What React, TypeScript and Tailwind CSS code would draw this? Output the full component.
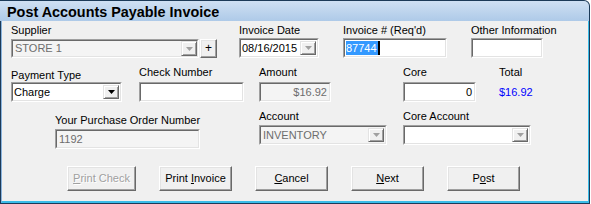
import React from "react";

const font = { fontFamily: '"Liberation Sans", Arial, sans-serif' };

function Arrow({ color = "#000" }: { color?: string }) {
  return (
    <svg width="7" height="4" viewBox="0 0 7 4">
      <path d="M0 0 H7 L3.5 4 Z" fill={color} />
    </svg>
  );
}

function ArrowBtn({ disabled }: { disabled?: boolean }) {
  return (
    <div className="w-[16px] h-full flex items-center justify-center bg-[#f0f0f0] border border-t-[#e3e3e3] border-l-[#e3e3e3] border-b-[#696969] border-r-[#696969] shadow-[inset_1px_1px_0_#ffffff,inset_-1px_-1px_0_#a0a0a0]">
      <Arrow color={disabled ? "#a0a0a0" : "#000"} />
    </div>
  );
}

function Sunken({
  w,
  h,
  bg = "bg-white",
  children,
}: {
  w: string;
  h: string;
  bg?: string;
  children?: React.ReactNode;
}) {
  return (
    <div className={`${w} ${h} flex border border-t-[#a0a0a0] border-l-[#a0a0a0] border-b-white border-r-white`}>
      <div className={`flex-1 flex items-stretch min-w-0 border border-t-[#696969] border-l-[#696969] border-b-[#e3e3e3] border-r-[#e3e3e3] ${bg}`}>
        {children}
      </div>
    </div>
  );
}

function Label({ children, cls = "" }: { children: React.ReactNode; cls?: string }) {
  return <div className={`h-[13px] leading-[13px] text-[11px] text-black whitespace-nowrap ${cls}`}>{children}</div>;
}

function Btn({
  w,
  h = "h-[25px]",
  children,
  disabled,
}: {
  w: string;
  h?: string;
  children: React.ReactNode;
  disabled?: boolean;
}) {
  return (
    <div
      className={`${w} ${h} flex items-center justify-center bg-[#f0f0f0] border border-t-white border-l-white border-b-[#696969] border-r-[#696969] shadow-[inset_-1px_-1px_0_#a0a0a0,inset_1px_1px_0_#e3e3e3] text-[11px] ${
        disabled ? "text-[#a0a0a0] [text-shadow:1px_1px_0_#ffffff]" : "text-black"
      }`}
    >
      {children}
    </div>
  );
}

export default function App() {
  return (
    <div className="w-[591px] h-[204px] bg-white" style={font}>
      <div className="w-[590px] h-[204px] flex flex-col bg-[#1c3a58] rounded-tr-[6px] overflow-hidden">
        {/* title bar */}
        <div className="h-[20px] shrink-0 mr-[1px] mt-[1px] rounded-tr-[5px] bg-gradient-to-b from-[#cfe0f3] to-[#aecae8] flex items-center pl-[7px]">
          <span className="text-[14.4px] font-bold text-black leading-[16px] mt-[1px]">Post Accounts Payable Invoice</span>
        </div>
        {/* body */}
        <div className="flex-1 ml-[1px] mr-[1px] mb-[1px] border-l border-l-[#8ab4de] border-r border-r-[#3bbce8] border-b-2 border-b-[#3bbce8] bg-[#f0f0f0] flex flex-col pl-[9px] text-[11px]">
          {/* row 1 */}
          <div className="flex mt-[3px]">
            <div className="w-[228px] flex flex-col">
              <Label>Supplier</Label>
              <div className="flex mt-[2px]">
                <Sunken w="w-[188px]" h="h-[19px]" bg="bg-[#f4f4f4]">
                  <div className="flex-1 pl-[2px] flex items-center text-[#6d6d6d] text-[11px]">STORE 1</div>
                  <ArrowBtn disabled />
                </Sunken>
                <div className="ml-[1px]">
                  <Btn w="w-[17px]" h="h-[19px]">
                    <span className="text-[12px] leading-[12px] -mt-[1px]">+</span>
                  </Btn>
                </div>
              </div>
            </div>
            <div className="w-[104px] flex flex-col">
              <Label>Invoice Date</Label>
              <div className="mt-[1px]">
                <Sunken w="w-[80px]" h="h-[20px]">
                  <div className="flex-1 pl-[1px] flex items-center text-black text-[11px]">08/16/2015</div>
                  <div className="py-[1px] pr-[1px]">
                    <ArrowBtn disabled />
                  </div>
                </Sunken>
              </div>
            </div>
            <div className="w-[128px] flex flex-col">
              <Label>Invoice # (Req'd)</Label>
              <div className="mt-[1px]">
                <Sunken w="w-[104px]" h="h-[20px]">
                  <div className="flex-1 pl-[1px] flex items-center text-[11px]">
                    <span className="bg-[#3399ff] text-white leading-[14px] h-[14px] pr-[1px]">87744</span>
                    <span className="w-[2px] h-[14px] bg-black" />
                  </div>
                </Sunken>
              </div>
            </div>
            <div className="w-[80px] flex flex-col">
              <Label>Other Information</Label>
              <div className="mt-[1px]">
                <Sunken w="w-[72px]" h="h-[20px]" />
              </div>
            </div>
          </div>

          {/* row 2 */}
          <div className="flex mt-[8px]">
            <div className="w-[128px] flex flex-col">
              <Label cls="mt-[3px]">Payment Type</Label>
              <div>
                <Sunken w="w-[111px]" h="h-[20px]">
                  <div className="flex-1 pl-[1px] flex items-center text-black text-[11px]">Charge</div>
                  <div className="py-[1px] pr-[1px]">
                    <ArrowBtn />
                  </div>
                </Sunken>
              </div>
            </div>
            <div className="w-[120px] flex flex-col">
              <Label>Check Number</Label>
              <div className="mt-[3px]">
                <Sunken w="w-[105px]" h="h-[20px]" />
              </div>
            </div>
            <div className="w-[144px] flex flex-col">
              <Label>Amount</Label>
              <div className="mt-[3px]">
                <Sunken w="w-[72px]" h="h-[20px]" bg="bg-[#f4f4f4]">
                  <div className="flex-1 pr-[2px] flex items-center justify-end text-[#6d6d6d] text-[11px]">$16.92</div>
                </Sunken>
              </div>
            </div>
            <div className="w-[96px] flex flex-col">
              <Label>Core</Label>
              <div className="mt-[3px]">
                <Sunken w="w-[73px]" h="h-[20px]">
                  <div className="flex-1 pr-[2px] flex items-center justify-end text-black text-[11px]">0</div>
                </Sunken>
              </div>
            </div>
            <div className="flex flex-col">
              <Label>Total</Label>
              <div className="mt-[3px] h-[20px] flex items-center text-[#0000ff] text-[11px]">$16.92</div>
            </div>
          </div>

          {/* row 3 */}
          <div className="flex mt-[8px]">
            <div className="w-[248px] pl-[44px] flex flex-col">
              <Label cls="mt-[4px]">Your Purchase Order Number</Label>
              <div className="mt-[2px]">
                <Sunken w="w-[145px]" h="h-[20px]" bg="bg-[#f4f4f4]">
                  <div className="flex-1 pl-[2px] flex items-center text-[#6d6d6d] text-[11px]">1192</div>
                </Sunken>
              </div>
            </div>
            <div className="w-[144px] flex flex-col">
              <Label>Account</Label>
              <div className="mt-[2px]">
                <Sunken w="w-[128px]" h="h-[20px]" bg="bg-[#f4f4f4]">
                  <div className="flex-1 pl-[2px] flex items-center text-[#6d6d6d] text-[11px]">INVENTORY</div>
                  <div className="py-[1px] pr-[1px]">
                    <ArrowBtn disabled />
                  </div>
                </Sunken>
              </div>
            </div>
            <div className="flex flex-col">
              <Label>Core Account</Label>
              <div className="mt-[2px]">
                <Sunken w="w-[128px]" h="h-[20px]">
                  <div className="flex-1" />
                  <div className="py-[1px] pr-[1px]">
                    <ArrowBtn disabled />
                  </div>
                </Sunken>
              </div>
            </div>
          </div>

          {/* buttons */}
          <div className="flex mt-[17px] pl-[56px]">
            <Btn w="w-[69px]" disabled>
              <span>
                <u>P</u>rint Check
              </span>
            </Btn>
            <div className="ml-[23px]">
              <Btn w="w-[73px]">
                <span>
                  Print <u>I</u>nvoice
                </span>
              </Btn>
            </div>
            <div className="ml-[23px]">
              <Btn w="w-[73px]">
                <span>
                  <u>C</u>ancel
                </span>
              </Btn>
            </div>
            <div className="ml-[23px]">
              <Btn w="w-[73px]">
                <span>
                  <u>N</u>ext
                </span>
              </Btn>
            </div>
            <div className="ml-[23px]">
              <Btn w="w-[73px]">
                <span>
                  P<u>o</u>st
                </span>
              </Btn>
            </div>
          </div>
        </div>
      </div>
    </div>
  );
}
